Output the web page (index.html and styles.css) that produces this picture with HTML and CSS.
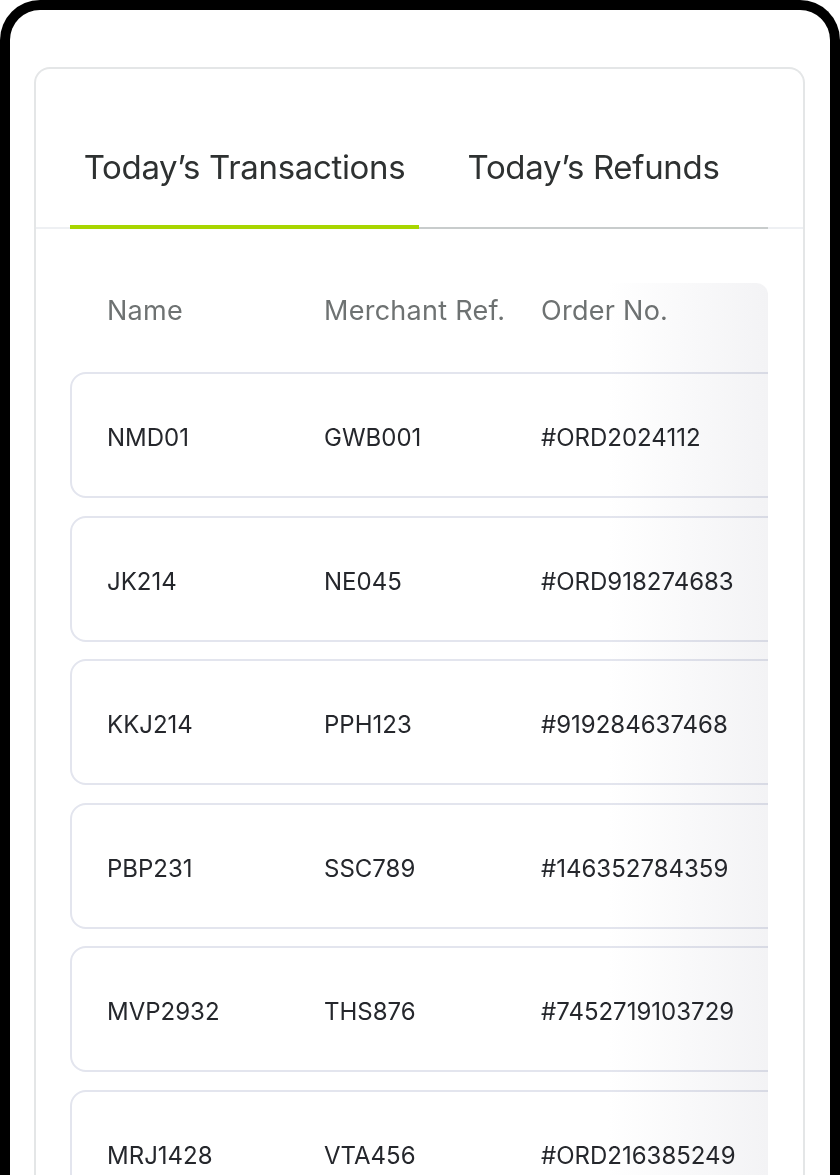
FILE: index.html
```html
<!DOCTYPE html>
<html lang="en">
<head>
  <meta charset="UTF-8" />
  <meta name="viewport" content="width=device-width, initial-scale=1" />
  <title>Today's Transactions</title>
  <link rel="stylesheet" href="styles.css">
</head>
<body>

  <div class="phone">
    <div class="card">

      <div class="tab-bar">
        <div class="tabs">
          <button class="tab active">Today’s Transactions</button>
          <button class="tab">Today’s Refunds</button>
        </div>
      </div>

      <div class="table-scroll">
        <div class="table-head">
          <span>Name</span>
          <span>Merchant Ref.</span>
          <span>Order No.</span>
        </div>

        <div class="table-body">
          <div class="row"><span>NMD01</span><span>GWB001</span><span>#ORD2024112</span></div>
          <div class="row"><span>JK214</span><span>NE045</span><span>#ORD918274683</span></div>
          <div class="row"><span>KKJ214</span><span>PPH123</span><span>#919284637468</span></div>
          <div class="row"><span>PBP231</span><span>SSC789</span><span>#146352784359</span></div>
          <div class="row"><span>MVP2932</span><span>THS876</span><span>#7452719103729</span></div>
          <div class="row"><span>MRJ1428</span><span>VTA456</span><span>#ORD216385249</span></div>
        </div>
      </div>

    </div>
  </div>

</body>
</html>
```

FILE: styles.css
```css
html, body {
  margin: 0;
  height: 100%;
  overflow: hidden;
  background: #fff;
}
body {
  font-family: Inter, "Liberation Sans", Arial, sans-serif;
}
.phone {
  box-sizing: border-box;
  height: 1175px;
  border: 10px solid #000;
  border-bottom: none;
  border-radius: 40px 40px 0 0;
  background: #fff;
  padding: 57px 25px 0 24px;
  overflow: hidden;
}
.card {
  border: 2px solid #e4e6e7;
  border-bottom: none;
  border-radius: 16px 16px 0 0;
  height: 1200px;
}

/* tabs */
.tab-bar {
  padding: 0 35px 0 34px;
  border-bottom: 2px solid #eef0f3;
}
.tabs {
  display: flex;
  margin-bottom: -2px;
  border-bottom: 2px solid #c8cccc;
}
.tab {
  flex: 1;
  margin-bottom: -2px;
  padding: 80px 0 40px;
  background: none;
  border: none;
  border-bottom: 4px solid transparent;
  font-family: Inter, "Liberation Sans", sans-serif;
  font-size: 33px;
  line-height: 36px;
  letter-spacing: -0.01em;
  color: #2e3131;
  cursor: pointer;
}
.tab.active {
  border-bottom-color: #a8d600;
}

/* table */
.table-scroll {
  position: relative;
  margin: 54px 35px 0 34px;
  overflow: hidden;
  border-top-right-radius: 12px;
}
.table-scroll::after {
  content: "";
  position: absolute;
  top: 0;
  right: 0;
  bottom: 0;
  width: 160px;
  background: linear-gradient(to right, #fff, #f3f3f5);
  mix-blend-mode: multiply;
  pointer-events: none;
}
.table-head,
.row span {
  white-space: nowrap;
}
.table-head {
  display: grid;
  grid-template-columns: 217px 217px 1fr;
  padding: 13px 0 47px 37px;
  font-size: 27px;
  line-height: 29px;
  letter-spacing: 0.01em;
  color: #6e7272;
}
.table-body {
  display: flex;
  flex-direction: column;
  gap: 17.6px;
}
.row {
  display: grid;
  grid-template-columns: 217px 217px 1fr;
  align-items: center;
  width: 820px;
  height: 126px;
  box-sizing: border-box;
  padding: 5px 0 0 35px;
  border: 2px solid #e3e5ee;
  border-radius: 16px;
  font-size: 24px;
  line-height: 29px;
  color: #25272c;
}
```
